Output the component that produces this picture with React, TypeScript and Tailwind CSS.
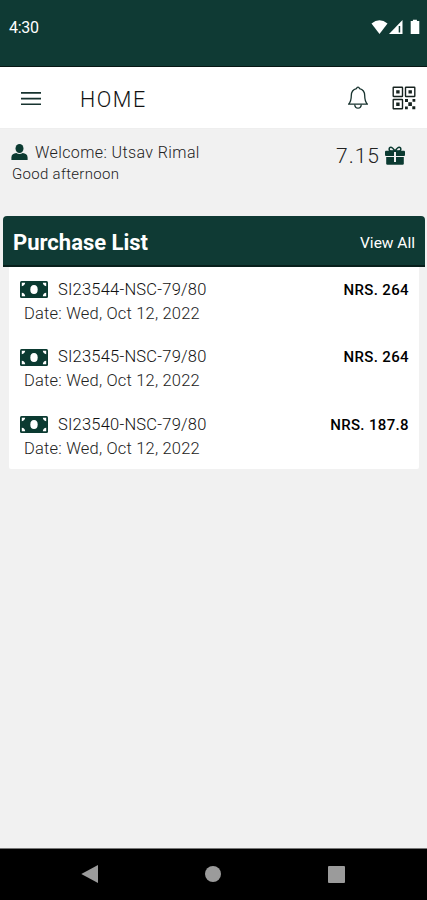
import React from "react";

const purchases = [
  { id: "SI23544-NSC-79/80", date: "Wed, Oct 12, 2022", amount: "264" },
  { id: "SI23545-NSC-79/80", date: "Wed, Oct 12, 2022", amount: "264" },
  { id: "SI23540-NSC-79/80", date: "Wed, Oct 12, 2022", amount: "187.8" },
];

function StatusIcons() {
  return (
    <svg className="mt-[19px] h-4 w-[50px]" viewBox="0 0 50 16" fill="#fff">
      <path d="M.5 4.600Q8.500-2 16.500 4.600L8.500 15Z" />
      <path d="M31.500 1v14H18Z" />
      <path d="M27.700 7v6.500h1.500V7z" fill="#0f3a34" />
      <path d="M39.700 2h2.200V.7h4V2h2.400v13h-8.600z" />
    </svg>
  );
}

function BellIcon() {
  return (
    <svg className="h-6 w-[22px]" viewBox="0 0 22 24" fill="none" stroke="#18332f" strokeWidth="1.300" strokeLinejoin="round">
      <path d="M11 1.200c-.8 0-1.300.6-1.500 1.400C6.300 3.400 4.300 5.900 4.300 9.500c0 5-.8 6.700-2.700 8.700h18.800c-1.900-2-2.700-3.700-2.700-8.700 0-3.600-2-6.100-5.200-6.900-.2-.8-.7-1.400-1.500-1.400Z" />
      <path d="M7.700 18.500c.2 2.300 1.500 3.700 3.300 3.700s3.100-1.400 3.300-3.700" />
    </svg>
  );
}

function QrIcon() {
  return (
    <svg className="size-6" viewBox="0 0 24 24" fill="#16221f">
      <g fill="none" stroke="#16221f" strokeWidth="1.400">
        <rect x="1.200" y="1.200" width="9.300" height="9.300" rx=".5" />
        <rect x="13.500" y="1.200" width="9.300" height="9.300" rx=".5" />
        <rect x="1.200" y="13.500" width="9.300" height="9.300" rx=".5" />
      </g>
      <path d="M4.200 4.200h3.400v3.400H4.200zM16.500 4.200h3.400v3.400h-3.400zM4.200 16.500h3.400v3.400H4.200zM16.300 16.300h3.600v3.600h-3.600zM13 13h3v3h-3zM20.500 13h2.800v2.800h-2.800zM13 20.500h2.800v2.800H13zM20.300 20.300h3v3h-3z" />
    </svg>
  );
}

function UserIcon() {
  return (
    <svg className="h-4 w-[17px]" viewBox="0 0 17 16" fill="#0b3a31">
      <ellipse cx="8.500" cy="4.500" rx="4" ry="4.500" />
      <path d="M.4 16v-2.600c0-2.600 2.200-3.800 4.900-4.300 2 1.300 4.400 1.300 6.400 0 2.700.5 4.900 1.700 4.900 4.300V16z" />
    </svg>
  );
}

function GiftIcon() {
  return (
    <svg className="h-[19px] w-5" viewBox="0 0 20 19">
      <g fill="#0b3a31">
        <rect y="4.700" width="20" height="5.300" rx="1" />
        <path d="M1.200 11h17.600v6.500q0 1.200-1.200 1.200H2.400q-1.200 0-1.200-1.200z" />
      </g>
      <path d="M10 5C8.300 2.700 7.200 1.300 5.900 1.300c-2.300 0-2.300 3.700 0 3.700zM10 5c1.700-2.300 2.800-3.700 4.100-3.700 2.300 0 2.300 3.700 0 3.700z" fill="none" stroke="#0b3a31" strokeWidth="1.500" />
      <path d="M9 6h2v10H9z" fill="#f0f0f0" />
    </svg>
  );
}

function CashIcon() {
  return (
    <svg className="h-[17px] w-7" viewBox="0 0 28 17">
      <rect width="28" height="17" rx="1.500" fill="#0b3a31" />
      <ellipse cx="14" cy="8.500" rx="3.700" ry="4.500" fill="#fff" />
      <path d="M1.800 1.800h3.400Q4.800 4.800 1.800 5.200zM26.200 1.800h-3.400q.4 3 3.400 3.400zM1.800 15.200h3.400q-.4-3-3.400-3.400zM26.200 15.200h-3.400q.4-3 3.400-3.400z" fill="#fff" />
    </svg>
  );
}

export default function App() {
  return (
    <div className="flex h-[900px] w-[427px] flex-col overflow-hidden bg-[#f1f1f1] font-['Roboto',sans-serif] whitespace-nowrap">
      <div className="flex h-[67px] shrink-0 justify-between border-b border-[#071714] bg-[#0f3a34] pr-[6px] pl-[9px]">
        <span className="mt-[16px] text-[16px] leading-6 tracking-[-0.300px] text-white">4:30</span>
        <StatusIcons />
      </div>

      <header className="flex h-[62px] shrink-0 items-center border-b border-[#eeeeee] bg-white pr-[11px] pl-[21px]">
        <svg className="mt-px h-[15px] w-5" viewBox="0 0 20 15" fill="#17332f">
          <path d="M0 1h20v1.700H0zM0 6.700h20v1.700H0zM0 12.400h20v1.700H0z" />
        </svg>
        <h1 className="ml-[39px] pt-[4px] text-[21.500px] leading-7 font-light tracking-[1.500px] text-[#111]">HOME</h1>
        <div className="mt-px ml-auto flex items-center gap-[23px]">
          <BellIcon />
          <QrIcon />
        </div>
      </header>

      <section className="flex h-[87px] shrink-0 justify-between pr-[22px] pl-[11px] text-[#222]">
        <div className="pt-[12px]">
          <div className="flex h-[22px] items-center gap-[7px]">
            <UserIcon />
            <span className="pt-px text-[16px] leading-[22px] font-light tracking-[0.400px]">Welcome: Utsav Rimal</span>
          </div>
          <p className="ml-px text-[15px] leading-[22px] font-light tracking-[0.300px]">Good afternoon</p>
        </div>
        <div className="flex h-7 items-center gap-[5px] pt-[25px]">
          <span className="text-[21px] leading-7 font-light tracking-[1px]">7.15</span>
          <GiftIcon />
        </div>
      </section>

      <main className="flex grow flex-col">
        <div className="mr-[2px] ml-[3px] flex h-[51px] items-center justify-between rounded-t-[4px] border-b-2 border-[#071f1b] bg-[#0f3a34] pr-[10px] pl-[10px] text-white">
          <h2 className="pt-[4px] text-[22px] leading-7 font-bold">Purchase List</h2>
          <span className="pt-[4px] text-[15.500px] leading-6">View All</span>
        </div>
        <ul className="mr-2 ml-[9px] h-[202px] rounded-b-[2px] bg-white">
          {purchases.map((p) => (
            <li key={p.id} className="h-[67.500px] pt-[10.500px] pr-[10px] pl-[11px]">
              <div className="flex h-6 items-center">
                <CashIcon />
                <span className="ml-[10px] text-[16.500px] leading-6 font-light tracking-[0.220px] text-[#111]">{p.id}</span>
                <span className="ml-auto text-[15px] leading-6 font-medium tracking-[0.350px] text-black">NRS. {p.amount}</span>
              </div>
              <p className="ml-[4px] text-[16.500px] leading-6 font-light tracking-[0.190px] text-[#222]">Date: {p.date}</p>
            </li>
          ))}
        </ul>
      </main>

      <nav className="h-[52px] shrink-0 border-t border-[#777] bg-black pt-[16px] pr-[82px] pl-[81px]">
        <div className="flex items-center justify-between">
          <svg className="h-[18px] w-[17px]" viewBox="0 0 17 18" fill="#9b9b9b">
            <path d="M.3 9 17 0v18z" />
          </svg>
          <span className="size-4 rounded-full bg-[#9b9b9b]" />
          <span className="size-[17px] rounded-[1px] bg-[#9b9b9b]" />
        </div>
      </nav>
    </div>
  );
}
